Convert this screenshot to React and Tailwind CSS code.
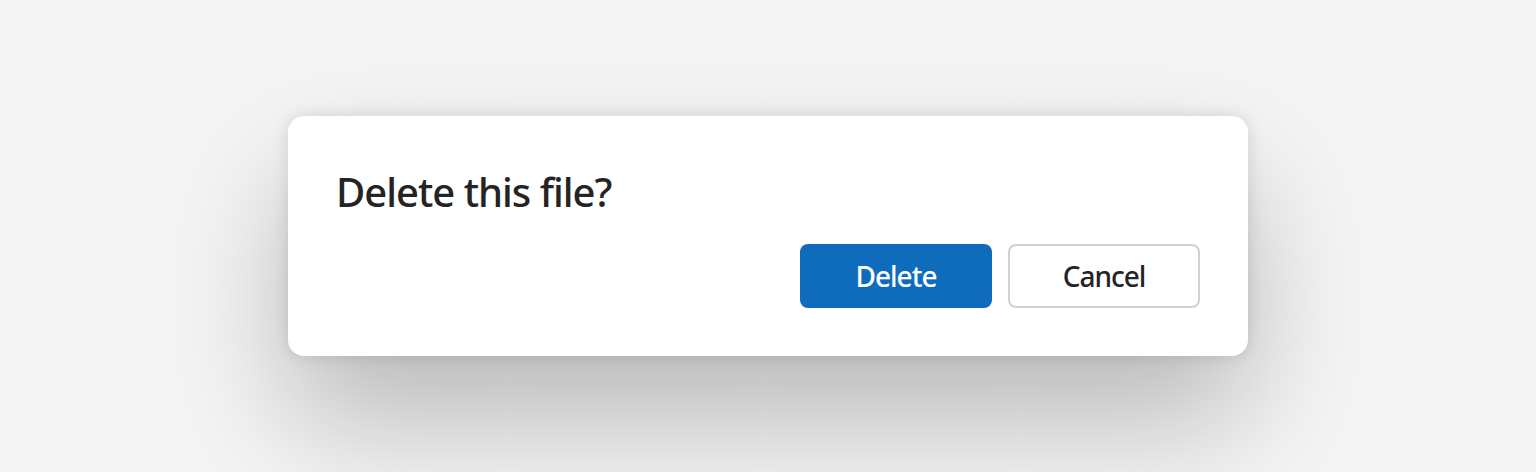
export default function App() {
  const font = { fontFamily: '"Segoe UI", "Noto Sans", "Open Sans", sans-serif' };
  return (
    <div className="w-[1536px] h-[472px] bg-[#f5f5f5] flex justify-center items-start pt-[116px] overflow-hidden" style={font}>
      <div className="w-[960px] h-[240px] bg-white rounded-[16px] p-[48px] flex flex-col shadow-[0_0_16px_rgba(0,0,0,0.12),0_64px_128px_rgba(0,0,0,0.25)]">
        <h2 className="text-[40px] leading-[56px] font-[550] text-[#242424] tracking-[-1px]">Delete this file?</h2>
        <div className="mt-[24px] flex justify-end gap-[16px]">
          <button className="w-[192px] h-[64px] rounded-[8px] bg-[#0f6cbd] text-white text-[28px] font-[550] leading-[40px] tracking-[-1px]">Delete</button>
          <button className="w-[192px] h-[64px] rounded-[8px] bg-white border-2 border-[#d1d1d1] text-[#242424] text-[28px] font-[550] leading-[40px] tracking-[-1px]">Cancel</button>
        </div>
      </div>
    </div>
  );
}
